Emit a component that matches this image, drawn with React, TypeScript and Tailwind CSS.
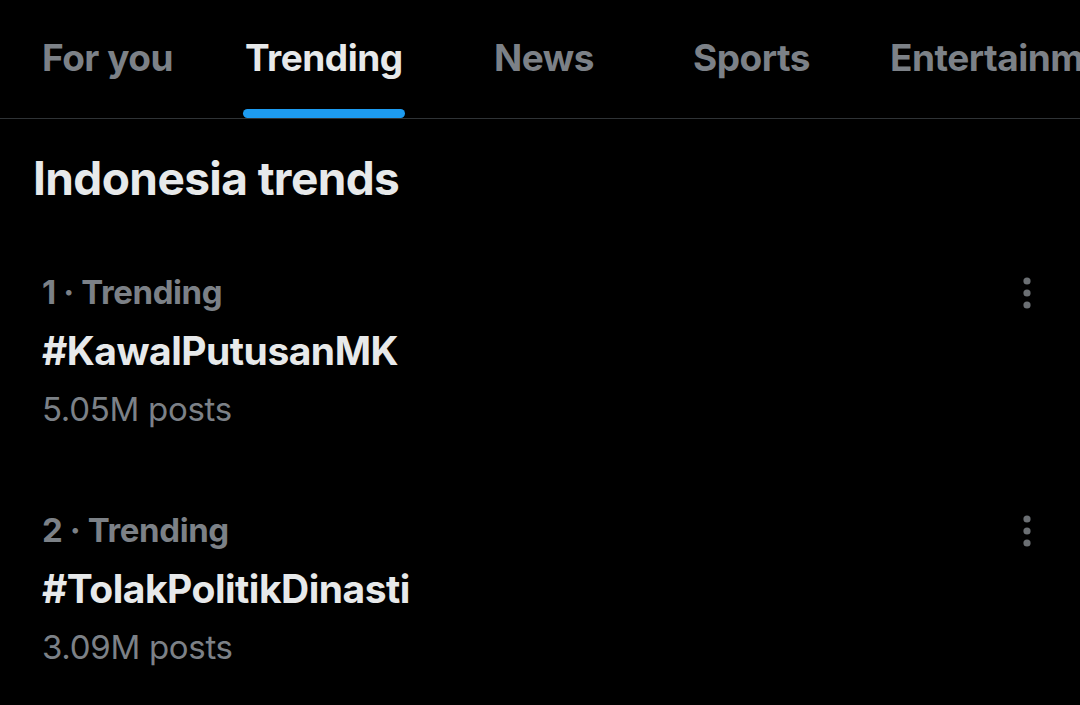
import React from 'react';

const tabs = [
    { label: 'For you', ml: 'ml-[42px]' },
    { label: 'Trending', ml: 'ml-[72px]', active: true },
    { label: 'News', ml: 'ml-[89px]' },
    { label: 'Sports', ml: 'ml-[99px]' },
    { label: 'Entertainment', ml: 'ml-[80px]' },
];

const trends = [
    { rank: 1, name: '#KawalPutusanMK', posts: '5.05M posts' },
    { rank: 2, name: '#TolakPolitikDinasti', posts: '3.09M posts' },
];

function MoreIcon() {
    return (
        <svg width="10" height="34" viewBox="0 0 10 34" className="text-[#6b6f73]">
            <circle cx="5" cy="5" r="3.6" fill="currentColor" />
            <circle cx="5" cy="17" r="3.6" fill="currentColor" />
            <circle cx="5" cy="29" r="3.6" fill="currentColor" />
        </svg>
    );
}

export default function App() {
    return (
        <div className="w-[1080px] h-[705px] overflow-hidden bg-black font-['Inter',sans-serif]">
            {/* tab bar */}
            <div className="h-[119px] border-b border-[#2f3336] flex whitespace-nowrap overflow-hidden">
                {tabs.map((tab) => (
                    <div key={tab.label} className={`${tab.ml} shrink-0 flex flex-col`}>
                        <span
                            className={`pt-[36px] text-[37px] leading-[44px] font-bold tracking-[-0.5px] ${
                                tab.active ? 'text-[#e7e9ea]' : 'text-[#7c8187]'
                            }`}
                        >
                            {tab.label}
                        </span>
                        {tab.active && <div className="mt-auto h-[9px] w-[162px] -ml-[2px] rounded-full bg-[#1d9bf0]" />}
                    </div>
                ))}
            </div>

            <h1 className="pl-[33px] mt-[31px] text-[46px] leading-[56px] font-bold tracking-[-0.6px] text-[#e7e9ea]">
                Indonesia trends
            </h1>

            <div className="mt-[66px] flex flex-col gap-[81px]">
                {trends.map((t) => (
                    <div key={t.rank} className="flex pl-[42px] pr-[48px]">
                        <div className="flex-1">
                            <div className="text-[33px] leading-[40px] font-bold tracking-[-0.4px] text-[#7c8187]">
                                {t.rank} · Trending
                            </div>
                            <div className="mt-[15px] text-[39px] leading-[48px] font-bold tracking-[-0.5px] text-[#e7e9ea]">
                                {t.name}
                            </div>
                            <div className="mt-[14px] text-[33px] leading-[40px] tracking-[-0.3px] text-[#7c8187]">
                                {t.posts}
                            </div>
                        </div>
                        <div className="pt-[4px]">
                            <MoreIcon />
                        </div>
                    </div>
                ))}
            </div>
        </div>
    );
}
